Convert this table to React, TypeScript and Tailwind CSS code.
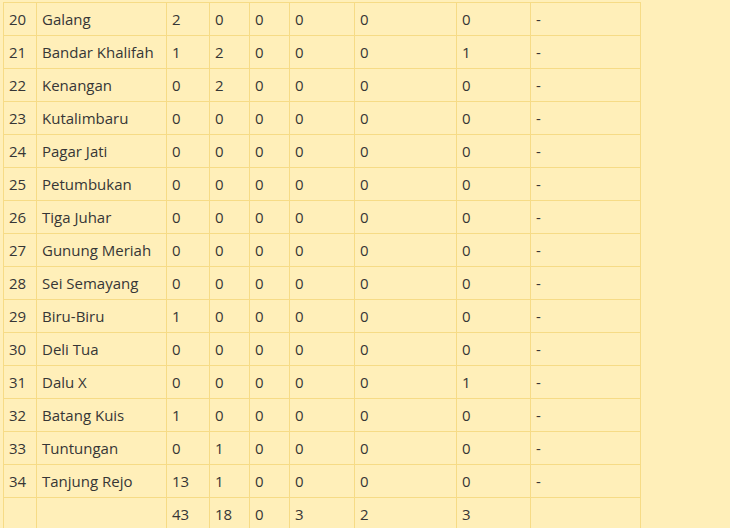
const rows: [number, string, string[], string][] = [
  [20, "Galang", ["2", "0", "0", "0", "0", "0"], "-"],
  [21, "Bandar Khalifah", ["1", "2", "0", "0", "0", "1"], "-"],
  [22, "Kenangan", ["0", "2", "0", "0", "0", "0"], "-"],
  [23, "Kutalimbaru", ["0", "0", "0", "0", "0", "0"], "-"],
  [24, "Pagar Jati", ["0", "0", "0", "0", "0", "0"], "-"],
  [25, "Petumbukan", ["0", "0", "0", "0", "0", "0"], "-"],
  [26, "Tiga Juhar", ["0", "0", "0", "0", "0", "0"], "-"],
  [27, "Gunung Meriah", ["0", "0", "0", "0", "0", "0"], "-"],
  [28, "Sei Semayang", ["0", "0", "0", "0", "0", "0"], "-"],
  [29, "Biru-Biru", ["1", "0", "0", "0", "0", "0"], "-"],
  [30, "Deli Tua", ["0", "0", "0", "0", "0", "0"], "-"],
  [31, "Dalu X", ["0", "0", "0", "0", "0", "1"], "-"],
  [32, "Batang Kuis", ["1", "0", "0", "0", "0", "0"], "-"],
  [33, "Tuntungan", ["0", "1", "0", "0", "0", "0"], "-"],
  [34, "Tanjung Rejo", ["13", "1", "0", "0", "0", "0"], "-"],
];

const totals = ["43", "18", "0", "3", "2", "3"];

const widths = ["w-[33px]", "w-[130px]", "w-[43px]", "w-[40px]", "w-[40px]", "w-[65px]", "w-[102px]", "w-[74px]", "w-[110px]"];

const cell = "h-[33px] border border-[#f6db86] pl-[5px] pr-1 align-middle whitespace-nowrap";

export default function App() {
  return (
    <div
      className="min-h-screen bg-[#ffefb9] pl-[3px] pt-[2px] text-[15px] text-[#363636]"
      style={{ fontFamily: '"Open Sans", "Noto Sans", sans-serif' }}
    >
      <table className="table-fixed border-collapse w-[638px]">
        <colgroup>
          {widths.map((w, i) => (
            <col key={i} className={w} />
          ))}
        </colgroup>
        <tbody>
          {rows.map(([no, name, vals, note]) => (
            <tr key={no}>
              <td className={cell}>{no}</td>
              <td className={cell}>{name}</td>
              {vals.map((v, i) => (
                <td key={i} className={cell}>
                  {v}
                </td>
              ))}
              <td className={cell}>{note}</td>
            </tr>
          ))}
          <tr>
            <td className={cell}></td>
            <td className={cell}></td>
            {totals.map((v, i) => (
              <td key={i} className={cell}>
                {v}
              </td>
            ))}
            <td className={cell}></td>
          </tr>
        </tbody>
      </table>
    </div>
  );
}
